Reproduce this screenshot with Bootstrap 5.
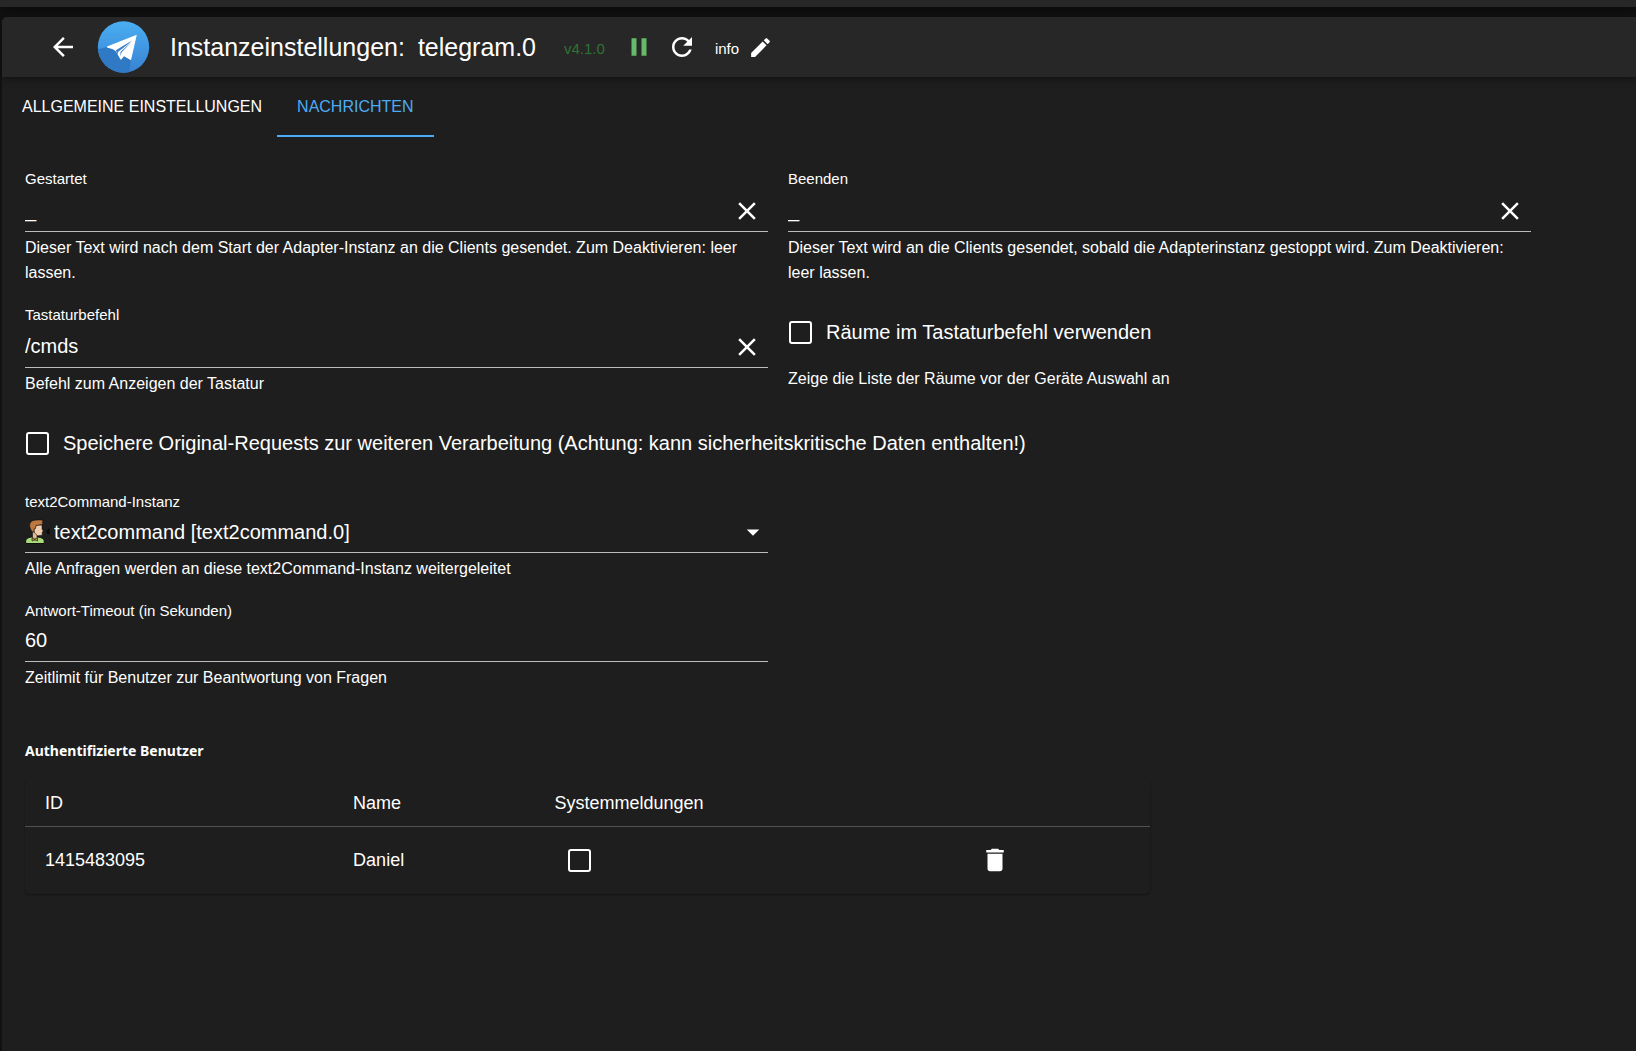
<!DOCTYPE html>
<html lang="de" data-bs-theme="dark">
<head>
<meta charset="utf-8">
<meta name="viewport" content="width=device-width, initial-scale=1">
<title>Instanzeinstellungen: telegram.0</title>
<link href="https://cdn.jsdelivr.net/npm/bootstrap@5.3.0/dist/css/bootstrap.min.css" rel="stylesheet">
<style>
  body { font-family: "Liberation Sans", Arial, sans-serif; font-size: 20px; line-height: 30px; color: #fff; background: #121212; }
  .top-strip { height: 7px; background: #272727; box-shadow: 0 2px 8px rgba(0,0,0,.6); }
  .panel { margin: 10px 0 0 2px; background: #1e1e1e; border-radius: 5px 0 0 0; }
  .toolbar { height: 60px; padding-left: 46px; background: #272727; border-radius: 5px 0 0 0; box-shadow: 0 2px 8px rgba(0,0,0,.45); }
  .toolbar h1 { display: flex; gap: 13px; font-size: 25px; line-height: 32px; font-weight: 400; margin: 0 28px 0 20px; }
  .app-logo { margin-left: 19px; }
  .version, .info-label { font-size: 15px; padding-top: 3px; }
  .version { color: #2f7333; margin-right: 19px; }
  .info-label { margin: 0 9px 0 18px; }
  .reload { margin-left: 13px; }
  .plain { display: flex; padding: 0; border: 0; background: none; color: #fff; }
  svg { display: block; fill: currentColor; flex: none; }
  .tab-link { display: block; height: 60px; padding: 0 20px; font-size: 16px; line-height: 60px; color: #fff; text-decoration: none; border-bottom: 2px solid transparent; }
  .tab-link + .tab-link { margin-left: -5px; }
  .tab-link.active { color: #4dabf5; border-color: #4dabf5; }
  .form-area { padding: 33px 105px 0 23px; }
  .form-grid { --bs-gutter-x: 20px; --bs-gutter-y: 20px; }
  .field-label { display: block; font-size: 15px; line-height: 18px; }
  .field-line { display: flex; align-items: center; height: 42px; border-bottom: 1px solid #bcbcbc; }
  .field-line.tall { height: 44px; padding-top: 2px; }
  .field-line .plain { padding: 0 6px; }
  .field-line input, .field-line select { flex: 1; min-width: 0; height: 100%; padding: 0; border: 0; outline: 0; color: #fff; background: transparent; font-size: 20px; }
  .field-line select { appearance: none; margin-left: 4px; background: url("data:image/svg+xml,%3Csvg xmlns='http://www.w3.org/2000/svg' viewBox='0 0 24 24'%3E%3Cpath fill='white' d='m7 10 5 5 5-5z'/%3E%3C/svg%3E") no-repeat right center / 30px; }
  .field-line select option { background: #1e1e1e; }
  .hint { font-size: 16px; line-height: 25px; margin: 3px 0 1px; }
  .check-line { display: flex; align-items: center; height: 52px; padding-left: 1px; gap: 14px; }
  .box { appearance: none; display: block; flex: none; width: 23px; height: 23px; margin: 0; border: 2px solid #fff; border-radius: 3px; background: transparent; }
  .box:checked { background: #4dabf5; }
  .section-title { font-family: "Noto Sans", sans-serif; font-size: 14px; line-height: 20px; font-weight: 700; margin: 50px 0 18px; }
  .user-table { border-radius: 5px; box-shadow: 0 1px 2px rgba(0,0,0,.4); }
  .user-table table { width: 100%; table-layout: fixed; font-size: 18px; line-height: 26px; }
  .user-table th, .user-table td { padding: 0 20px; height: 68px; font-weight: 400; text-align: left; }
  .user-table th { height: 47px; padding-top: 2px; border-bottom: 1px solid #515151; }
  .user-table td .box { margin-left: 14px; }
  .user-table td .plain { margin-left: 11px; }
  .c-id { width: 27.4%; } .c-name { width: 17.9%; } .c-sys { width: 36.9%; }
</style>
<script src="https://cdn.jsdelivr.net/npm/bootstrap@5.3.0/dist/js/bootstrap.bundle.min.js"></script>
</head>
<body>
<div class="d-flex flex-column min-vh-100">
  <div class="top-strip"></div>
  <main class="panel flex-grow-1">
    <header class="toolbar d-flex align-items-center">
      <button type="button" class="plain" aria-label="Zurück">
        <svg width="30" height="30" viewBox="0 0 24 24"><path d="M20 11H7.83l5.59-5.59L12 4l-8 8 8 8 1.41-1.41L7.83 13H20z"/></svg>
      </button>
      <svg class="app-logo" width="53" height="52" viewBox="0 0 53 52" aria-hidden="true">
        <defs>
          <linearGradient id="sky" x1="0" y1="0" x2="0" y2="1"><stop offset="0" stop-color="#4aaef2"/><stop offset="1" stop-color="#3982d3"/></linearGradient>
          <clipPath id="disc"><circle cx="26.500" cy="26" r="25.700"/></clipPath>
        </defs>
        <g clip-path="url(#disc)">
          <rect width="53" height="52" fill="url(#sky)"/>
          <path d="M0 28.500L10 26l10 4 14 9-2 13H0z" fill="#2f79c5"/>
          <path d="M39.800 13.700L10 25.500v1l6 1.700 3 2.300 4.500 8h.8l2.700-3.200 7 4z" fill="#fff"/>
          <path d="M35 19.500L18.800 29.300l1.700 3.700z" fill="#3a80cb"/>
          <path d="M35 20.500L23.800 31.500l-.7 4.200-2.300-4.700z" fill="#fff"/>
          <path d="M35 20.500L23.600 30.800l-.5 4.400 1.600-3.900z" fill="#3a80cb"/>
        </g>
      </svg>
      <h1><span>Instanzeinstellungen:</span><span>telegram.0</span></h1>
      <span class="version">v4.1.0</span>
      <button type="button" class="plain" aria-label="Pause">
        <svg width="30" height="30" viewBox="0 0 24 24"><path fill="#66bb6a" d="M6 19h4V5H6zm8-14v14h4V5z"/></svg>
      </button>
      <button type="button" class="plain reload" aria-label="Neu starten">
        <svg width="30" height="30" viewBox="0 0 24 24"><path d="M17.650 6.350C16.200 4.900 14.210 4 12 4c-4.420 0-7.990 3.580-7.990 8s3.570 8 7.990 8c3.730 0 6.840-2.550 7.730-6h-2.080c-.82 2.330-3.040 4-5.650 4-3.310 0-6-2.690-6-6s2.690-6 6-6c1.660 0 3.140.69 4.220 1.780L13 11h7V4z"/></svg>
      </button>
      <span class="info-label">info</span>
      <button type="button" class="plain" aria-label="Bearbeiten">
        <svg width="25" height="25" viewBox="0 0 24 24"><path d="M3 17.250V21h3.750L17.810 9.940l-3.750-3.750zM20.710 7.040c.39-.39.39-1.020 0-1.410l-2.340-2.340a.996.996 0 0 0-1.410 0l-1.830 1.830 3.750 3.750z"/></svg>
      </button>
    </header>

    <nav class="d-flex">
      <a class="tab-link" href="#">ALLGEMEINE EINSTELLUNGEN</a>
      <a class="tab-link active" href="#" aria-current="page">NACHRICHTEN</a>
    </nav>

    <form class="form-area">
      <div class="row form-grid">
        <div class="col-6">
          <label class="field-label" for="started">Gestartet</label>
          <div class="field-line tall">
            <input id="started" type="text" value="_">
            <button type="button" class="plain" aria-label="Leeren"><svg width="30" height="30" viewBox="0 0 24 24"><path d="M19 6.410 17.590 5 12 10.590 6.410 5 5 6.410 10.590 12 5 17.590 6.410 19 12 13.410 17.590 19 19 17.590 13.410 12z"/></svg></button>
          </div>
          <p class="hint">Dieser Text wird nach dem Start der Adapter-Instanz an die Clients gesendet. Zum Deaktivieren: leer lassen.</p>
        </div>
        <div class="col-6">
          <label class="field-label" for="stopped">Beenden</label>
          <div class="field-line tall">
            <input id="stopped" type="text" value="_">
            <button type="button" class="plain" aria-label="Leeren"><svg width="30" height="30" viewBox="0 0 24 24"><path d="M19 6.410 17.590 5 12 10.590 6.410 5 5 6.410 10.590 12 5 17.590 6.410 19 12 13.410 17.590 19 19 17.590 13.410 12z"/></svg></button>
          </div>
          <p class="hint">Dieser Text wird an die Clients gesendet, sobald die Adapterinstanz gestoppt wird. Zum Deaktivieren: leer lassen.</p>
        </div>
        <div class="col-6">
          <label class="field-label" for="keyboard">Tastaturbefehl</label>
          <div class="field-line tall">
            <input id="keyboard" type="text" value="/cmds">
            <button type="button" class="plain" aria-label="Leeren"><svg width="30" height="30" viewBox="0 0 24 24"><path d="M19 6.410 17.590 5 12 10.590 6.410 5 5 6.410 10.590 12 5 17.590 6.410 19 12 13.410 17.590 19 19 17.590 13.410 12z"/></svg></button>
          </div>
          <p class="hint">Befehl zum Anzeigen der Tastatur</p>
        </div>
        <div class="col-6">
          <div class="check-line mb-2">
            <input class="box" type="checkbox" id="rooms">
            <label for="rooms">Räume im Tastaturbefehl verwenden</label>
          </div>
          <p class="hint">Zeige die Liste der Räume vor der Geräte Auswahl an</p>
        </div>
        <div class="col-12">
          <div class="check-line mb-1">
            <input class="box" type="checkbox" id="raw">
            <label for="raw">Speichere Original-Requests zur weiteren Verarbeitung (Achtung: kann sicherheitskritische Daten enthalten!)</label>
          </div>
        </div>
        <div class="col-6">
          <label class="field-label" for="t2c">text2Command-Instanz</label>
          <div class="field-line">
            <svg width="25" height="25" viewBox="0 0 25 25" aria-hidden="true">
              <path d="M.7 24.500V22c0-2 2-3.500 6-4h6c4 .5 6.500 2 6.500 4v2.500z" fill="#a9dc78" stroke="#111"/>
              <path d="M7.500 12v6.500l2.500 2 2-2V15z" fill="#e3b994" stroke="#111" stroke-width=".6"/>
              <path d="M7 19l3 1.500 2.500-1.500v3L10 21l-3 1z" fill="#c9a04a" stroke="#111" stroke-width=".6"/>
              <path d="M9 6h8v4l1.300 2.200-1.100.8v3.200l-4.700.6L9 13z" fill="#f0cdae" stroke="#111" stroke-width=".5"/>
              <path d="M7.500 13C4 9 3.500 4 7 2c2-1.200 6-1.200 10.700-1v4.500L11 6.500l-.5 3-1.500.5v3z" fill="#bd7840" stroke="#111" stroke-width=".7"/>
              <path d="M24.500 9v7L21.500 13.200v-1.400z" fill="#080808"/>
            </svg>
            <select id="t2c"><option>text2command [text2command.0]</option></select>
          </div>
          <p class="hint">Alle Anfragen werden an diese text2Command-Instanz weitergeleitet</p>
        </div>
        <div class="w-100 m-0"></div>
        <div class="col-6">
          <label class="field-label" for="timeout">Antwort-Timeout (in Sekunden)</label>
          <div class="field-line"><input id="timeout" type="text" inputmode="numeric" value="60"></div>
          <p class="hint">Zeitlimit für Benutzer zur Beantwortung von Fragen</p>
        </div>
      </div>

      <h2 class="section-title">Authentifizierte Benutzer</h2>
      <div class="row form-grid mt-0">
        <div class="col-9 mt-0">
          <div class="user-table">
            <table>
              <thead><tr><th class="c-id">ID</th><th class="c-name">Name</th><th class="c-sys">Systemmeldungen</th><th></th></tr></thead>
              <tbody>
                <tr>
                  <td>1415483095</td>
                  <td>Daniel</td>
                  <td><input class="box" type="checkbox" aria-label="Systemmeldungen"></td>
                  <td><button type="button" class="plain" aria-label="Löschen"><svg width="30" height="30" viewBox="0 0 24 24"><path d="M6 19c0 1.100.9 2 2 2h8c1.100 0 2-.9 2-2V7H6zM19 4h-3.500l-1-1h-5l-1 1H5v2h14z"/></svg></button></td>
                </tr>
              </tbody>
            </table>
          </div>
        </div>
      </div>
    </form>
  </main>
</div>
</body>
</html>
